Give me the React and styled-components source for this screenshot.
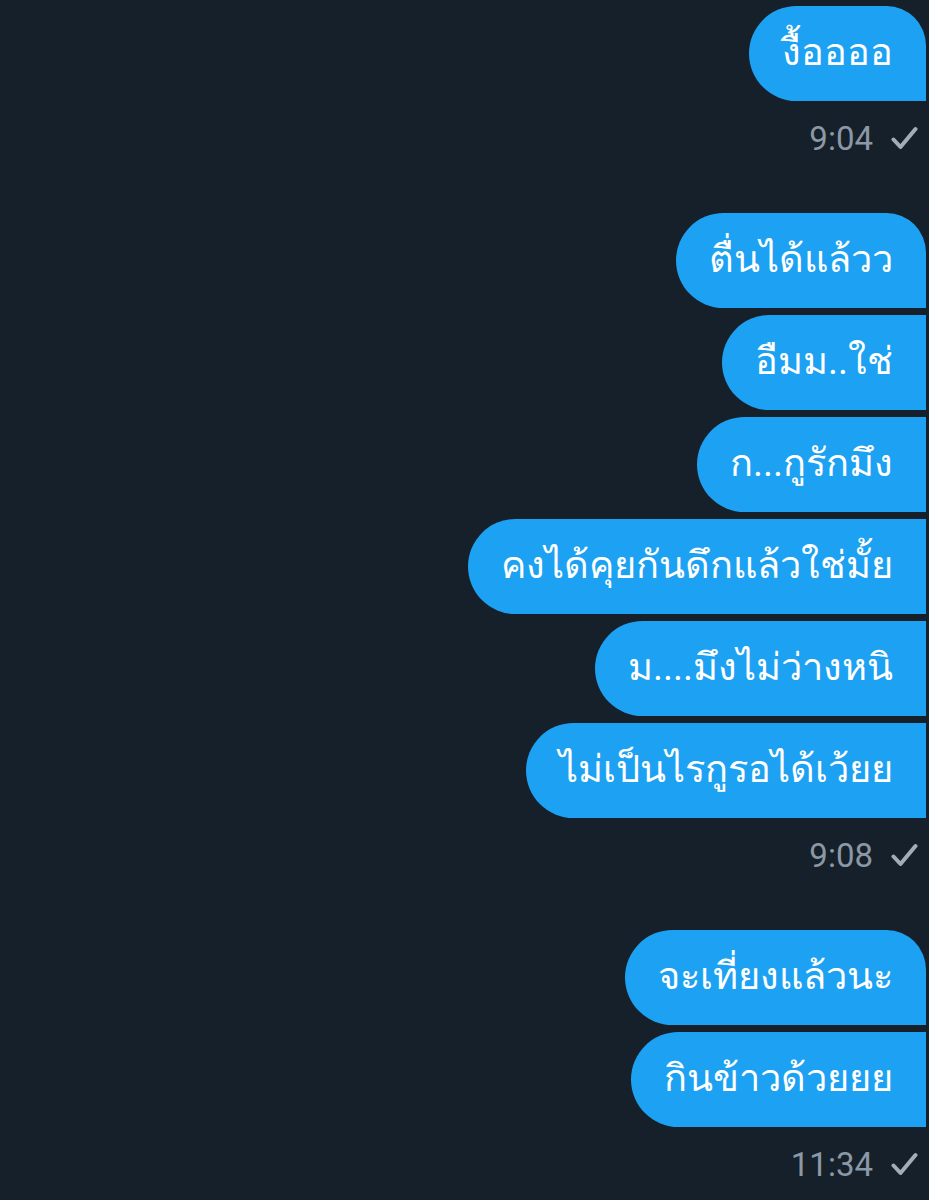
import React from 'react';
import styled, { createGlobalStyle } from 'styled-components';

const GlobalStyle = createGlobalStyle`
  html, body {
    margin: 0;
    padding: 0;
    background: #16202a;
  }
  body {
    font-family: Roboto, "Noto Sans", "DejaVu Sans", sans-serif;
  }
`;

const Thread = styled.div`
  display: flex;
  flex-direction: column;
  align-items: flex-end;
  min-height: 1200px;
  padding: 6px 3px 0 0;
  box-sizing: border-box;
  background: #16202a;
`;

const Group = styled.div`
  display: flex;
  flex-direction: column;
  align-items: flex-end;
  gap: 7px;
  margin-bottom: 55px;
`;

const Bubble = styled.div`
  display: flex;
  align-items: center;
  height: 95px;
  padding: 0 33px 4px;
  box-sizing: border-box;
  background: #1da1f2;
  color: #ffffff;
  font-size: 38px;
  white-space: nowrap;
  border-radius: 48px ${(p) => (p.first ? '40px' : '0')} 0 48px;
`;

const Meta = styled.div`
  display: flex;
  align-items: center;
  gap: 18px;
  margin-top: 11px;
  padding-right: 8px;
  color: #8b98a5;
  font-family: Roboto, sans-serif;
  font-size: 33px;
`;

const Check = () => (
  <svg width="27" height="25" viewBox="0 0 27 25">
    <polyline
      points="2.5,13.5 9.5,21 24.5,3"
      fill="none"
      stroke="#a3adb7"
      strokeWidth="4"
      strokeLinecap="round"
      strokeLinejoin="round"
    />
  </svg>
);

const groups = [
  { time: '9:04', messages: ['งื้ออออ'] },
  {
    time: '9:08',
    messages: [
      'ตื่นได้แล้วว',
      'อืมม..ใช่',
      'ก...กูรักมึง',
      'คงได้คุยกันดึกแล้วใช่มั้ย',
      'ม....มึงไม่ว่างหนิ',
      'ไม่เป็นไรกูรอได้เว้ยย',
    ],
  },
  { time: '11:34', messages: ['จะเที่ยงแล้วนะ', 'กินข้าวด้วยยย'] },
];

export default function App() {
  return (
    <>
      <GlobalStyle />
      <Thread>
        {groups.map((g) => (
          <Group key={g.time}>
            {g.messages.map((m, i) => (
              <Bubble key={i} first={i === 0}>
                {m}
              </Bubble>
            ))}
            <Meta>
              {g.time}
              <Check />
            </Meta>
          </Group>
        ))}
      </Thread>
    </>
  );
}
